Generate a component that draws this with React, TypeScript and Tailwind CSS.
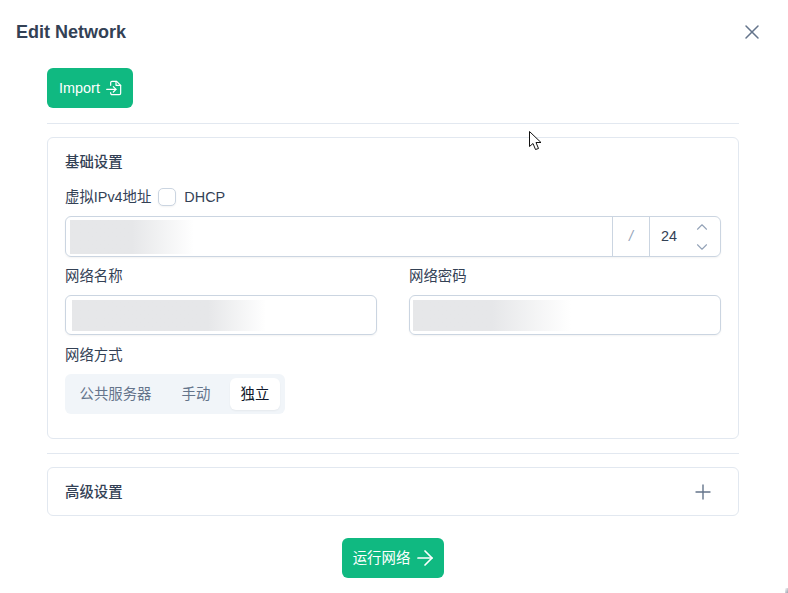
// App.tsx
import { ArrowRight, ChevronDown, ChevronUp, Plus, X } from 'lucide-react';

const ImportIcon = () => (
  <svg width="16" height="16" viewBox="0 0 24 24" fill="none" stroke="currentColor" strokeWidth="1.8" strokeLinecap="round" strokeLinejoin="round">
    <path d="M7 8V4a2 2 0 0 1 2-2h7l6 6v12a2 2 0 0 1-2 2H9a2 2 0 0 1-2-2v-1" />
    <path d="M15 2v6h7" />
    <path d="M1 14h14" />
    <path d="m11 10 4 4-4 4" />
  </svg>
);

const Cursor = () => (
  <svg className="absolute left-[529px] top-[131px]" width="14" height="20" viewBox="0 0 14 20">
    <path d="M0.5 0.5 L0.5 15.5 L4 12.5 L6.5 18.5 L9.5 17.5 L7 11.5 L12 11.5 Z" fill="#fff" stroke="#111" strokeWidth="1" />
  </svg>
);

const App = () => {
  return (
    <div className="relative flex h-[593px] w-[788px] flex-col overflow-hidden bg-white font-['Liberation_Sans','Noto_Sans_CJK_SC',sans-serif] text-[14.4px] text-[#334155]">
      <div className="flex h-[64px] items-center justify-between pl-4 pr-[24px]">
        <h1 className="text-lg font-bold text-[#334155]">Edit Network</h1>
        <X size={24} strokeWidth={1.5} className="text-[#64748b]" />
      </div>

      <div className="flex flex-col pl-[47px] pr-[49px]">
        <div className="mt-1 flex">
          <button className="flex h-10 w-[86px] items-center justify-center gap-[6px] rounded-md bg-[#10b981] pl-px text-white">
            <span className="pt-px">Import</span>
            <ImportIcon />
          </button>
        </div>

        <div className="mt-[15px] h-px bg-[#e2e8f0]" />

        <div className="mt-[13px] flex flex-col rounded-md border border-[#e2e8f0] px-[17px] pb-6 pt-[14px]">
          <div className="h-5 font-medium leading-5">基础设置</div>

          <div className="mt-4 flex h-[18px] items-center">
            <span className="pt-px">虚拟IPv4地址</span>
            <span className="ml-[7px] h-[18px] w-[18px] rounded-[5px] border border-[#cbd5e1] bg-white shadow-xs" />
            <span className="ml-2 pt-px">DHCP</span>
          </div>

          <div className="mt-[10px] flex h-[41px] rounded-md border border-[#cbd5e1] shadow-xs">
            <div className="flex flex-1 items-center pl-[4px]">
              <div className="h-[34px] w-[124px] bg-gradient-to-r from-[#e6e7e9] from-50% to-white" />
            </div>
            <div className="flex w-[38px] items-center justify-center border-x border-[#cbd5e1] italic text-[#94a3b8]">/</div>
            <div className="flex w-[70px] items-center pl-[11px]">
              <span className="flex-1 pt-px">24</span>
              <div className="flex flex-col gap-[2px] pr-[9px] pt-px text-[#94a3b8]">
                <ChevronUp size={18} strokeWidth={1.5} />
                <ChevronDown size={18} strokeWidth={1.5} />
              </div>
            </div>
          </div>

          <div className="mt-[9px] grid grid-cols-2 gap-x-8">
            <div className="flex flex-col">
              <label className="h-5 leading-5">网络名称</label>
              <div className="mt-[9px] flex h-10 items-center rounded-md border border-[#cbd5e1] pl-[6px] shadow-xs">
                <div className="h-[31px] w-[194px] bg-gradient-to-r from-[#e6e7e9] from-70% to-white" />
              </div>
            </div>
            <div className="flex flex-col">
              <label className="h-5 leading-5">网络密码</label>
              <div className="mt-[9px] flex h-10 items-center rounded-md border border-[#cbd5e1] pl-[3px] shadow-xs">
                <div className="h-[31px] w-[158px] bg-gradient-to-r from-[#e6e7e9] from-50% to-white" />
              </div>
            </div>
          </div>

          <label className="mt-[10px] h-5 leading-5">网络方式</label>
          <div className="mt-[9px] flex h-10 w-[220px] items-center gap-[9px] rounded-md bg-[#f1f5f9] px-1">
            <span className="flex h-8 w-[93px] items-center justify-center pt-px text-[#64748b]">公共服务器</span>
            <span className="flex h-8 w-[50px] items-center justify-center pt-px text-[#64748b]">手动</span>
            <span className="flex h-8 w-[50px] items-center justify-center rounded-md bg-white pt-px text-[#0f172a] shadow-xs">独立</span>
          </div>
        </div>

        <div className="mt-[14px] h-px bg-[#e2e8f0]" />

        <div className="mt-[13px] flex h-[49px] items-center justify-between rounded-md border border-[#e2e8f0] pl-[17px] pr-[23px]">
          <span className="pt-[2px] font-medium">高级设置</span>
          <Plus size={24} strokeWidth={1.4} className="text-[#64748b]" />
        </div>

        <div className="mt-[22px] flex justify-center">
          <button className="flex h-10 w-[102px] items-center justify-center gap-[3px] rounded-md bg-[#10b981] pl-1 text-white">
            <span className="pt-px">运行网络</span>
            <ArrowRight size={24} strokeWidth={1.7} />
          </button>
        </div>
      </div>

      <Cursor />
      <div className="absolute bottom-0 right-0 h-[5px] w-[3px] bg-gradient-to-br from-white to-[#9ca3af]" />
    </div>
  );
};

export default App;
